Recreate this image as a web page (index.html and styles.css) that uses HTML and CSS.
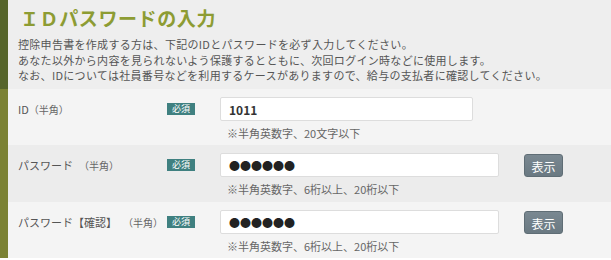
FILE: index.html
```html
<!DOCTYPE html>
<html lang="ja">
<head>
<meta charset="utf-8">
<title>IDパスワードの入力</title>
<link rel="stylesheet" href="styles.css">
</head>
<body>
<div class="panel">
  <div class="head">
    <h1 class="title">ＩＤパスワードの入力</h1>
    <p class="desc">控除申告書を作成する方は、下記のIDとパスワードを必ず入力してください。<br>あなた以外から内容を見られないよう保護するとともに、次回ログイン時などに使用します。<br>なお、IDについては社員番号などを利用するケースがありますので、給与の支払者に確認してください。</p>
  </div>
  <div class="row row-light">
    <div class="label">ID<span class="sub">（半角）</span></div>
    <div class="req"><span class="badge">必須</span></div>
    <div class="field">
      <div class="line">
        <div class="input input-short">1011</div>
      </div>
      <div class="hint">※半角英数字、20文字以下</div>
    </div>
  </div>
  <div class="row row-dark">
    <div class="label">パスワード<span class="sub sub-gap">（半角）</span></div>
    <div class="req"><span class="badge">必須</span></div>
    <div class="field">
      <div class="line">
        <div class="input input-long dots">●●●●●●</div>
        <span class="btn">表示</span>
      </div>
      <div class="hint">※半角英数字、6桁以上、20桁以下</div>
    </div>
  </div>
  <div class="row row-light">
    <div class="label">パスワード【確認】<span class="sub sub-gap">（半角）</span></div>
    <div class="req"><span class="badge">必須</span></div>
    <div class="field">
      <div class="line">
        <div class="input input-long dots">●●●●●●</div>
        <span class="btn">表示</span>
      </div>
      <div class="hint">※半角英数字、6桁以上、20桁以下</div>
    </div>
  </div>
</div>
</body>
</html>
```
FILE: styles.css
```css
html, body {
  margin: 0;
  padding: 0;
  background: #ffffff;
}
body {
  font-family: "Noto Sans CJK JP", "Noto Sans", sans-serif;
  color: #555555;
}
.panel {
  width: 611px;
}
.head {
  background: #eeeeee;
  border-left: 8px solid #56652b;
  padding: 5px 0 0 10px;
  height: 89px;
  box-sizing: border-box;
}
.title {
  margin: 0 0 0 2px;
  font-size: 19px;
  line-height: 26px;
  font-weight: bold;
  color: #8d9c33;
  letter-spacing: 0.6px;
}
.desc {
  margin: 6px 0 0 0;
  font-size: 11px;
  line-height: 15.5px;
  color: #555555;
  letter-spacing: 0.3px;
}
.row {
  display: grid;
  grid-template-columns: 149px 53px 1fr;
  border-left: 8px solid #7b8234;
  padding: 8px 0 0 10px;
  height: 56px;
  box-sizing: border-box;
}
.row-light { background: #f4f4f4; }
.row-dark { background: #ececec; height: 57px; }
.label {
  height: 24px;
  display: flex;
  align-items: center;
  font-size: 11px;
  color: #555555;
  white-space: nowrap;
}
.sub {
  font-size: 10px;
  color: #666666;
}
.sub-gap {
  margin-left: 6px;
}
.req {
  height: 24px;
  display: flex;
  align-items: center;
}
.badge {
  display: inline-block;
  width: 28px;
  height: 12px;
  line-height: 12px;
  text-align: center;
  font-size: 9px;
  color: #ffffff;
  background: #3f8080;
}
.line {
  display: flex;
  align-items: center;
  gap: 25px;
}
.input {
  height: 24px;
  box-sizing: border-box;
  background: #ffffff;
  border: 1px solid #dddddd;
  border-radius: 2px;
  padding-left: 8px;
  display: flex;
  align-items: center;
  font-size: 12px;
  font-weight: bold;
  color: #333333;
}
.input-short { width: 253px; }
.input-long { width: 279px; }
.dots {
  font-size: 11px;
  font-weight: normal;
  color: #222222;
}
.btn {
  display: inline-block;
  width: 39px;
  height: 23px;
  line-height: 23px;
  text-align: center;
  font-size: 12px;
  color: #ffffff;
  background: linear-gradient(#7a8891, #6a7982);
  border: 1px solid #5f6d75;
  box-sizing: border-box;
  border-radius: 3px;
}
.hint {
  margin: 4px 0 0 7px;
  font-size: 11px;
  line-height: 16px;
  color: #666666;
}
```
